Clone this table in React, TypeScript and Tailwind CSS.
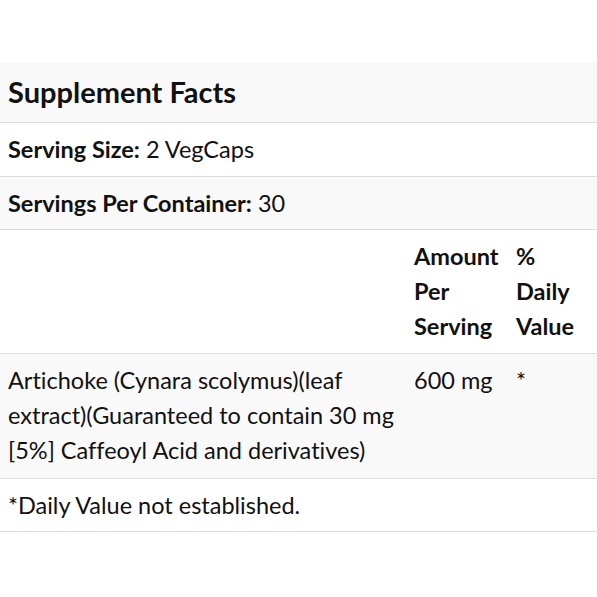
import React from "react";

const rowBase = "border-b border-[#dddddd] py-[9px] px-2";

const App = () => {
  return (
    <div
      className="min-h-[597px] w-[597px] bg-white pt-[62px] text-[#111111] [font-variant-ligatures:none]"
      style={{ fontFamily: "Lato, 'Liberation Sans', sans-serif" }}
    >
      <div className="text-[23.5px] leading-[35px]">
        <div className={`${rowBase} bg-[#f9f9f9]`}>
          <h1 className="text-[29px] font-bold leading-[42px]">Supplement Facts</h1>
        </div>

        <div className={`${rowBase} bg-white`}>
          <span className="font-bold">Serving Size:</span> 2 VegCaps
        </div>

        <div className={`${rowBase} bg-[#f9f9f9] leading-[34px]`}>
          <span className="font-bold">Servings Per Container:</span> 30
        </div>

        <div className="grid grid-cols-[406px_102px_1fr] border-b border-[#dddddd] bg-white font-bold">
          <div className="px-2 py-[9px]"></div>
          <div className="px-2 py-[9px]">
            Amount
            <br />
            Per
            <br />
            Serving
          </div>
          <div className="px-2 py-[9px]">
            %
            <br />
            Daily
            <br />
            Value
          </div>
        </div>

        <div className="grid grid-cols-[406px_102px_1fr] border-b border-[#dddddd] bg-[#f9f9f9]">
          <div className="px-2 py-[9px] pb-[10px]">
            Artichoke (Cynara scolymus)(leaf extract)(Guaranteed to contain 30 mg [5%] Caffeoyl Acid and derivatives)
          </div>
          <div className="px-2 py-[9px]">600 mg</div>
          <div className="px-2 py-[9px]">*</div>
        </div>

        <div className={`${rowBase} bg-white leading-[34px]`}>*Daily Value not established.</div>
      </div>
    </div>
  );
};

export default App;
